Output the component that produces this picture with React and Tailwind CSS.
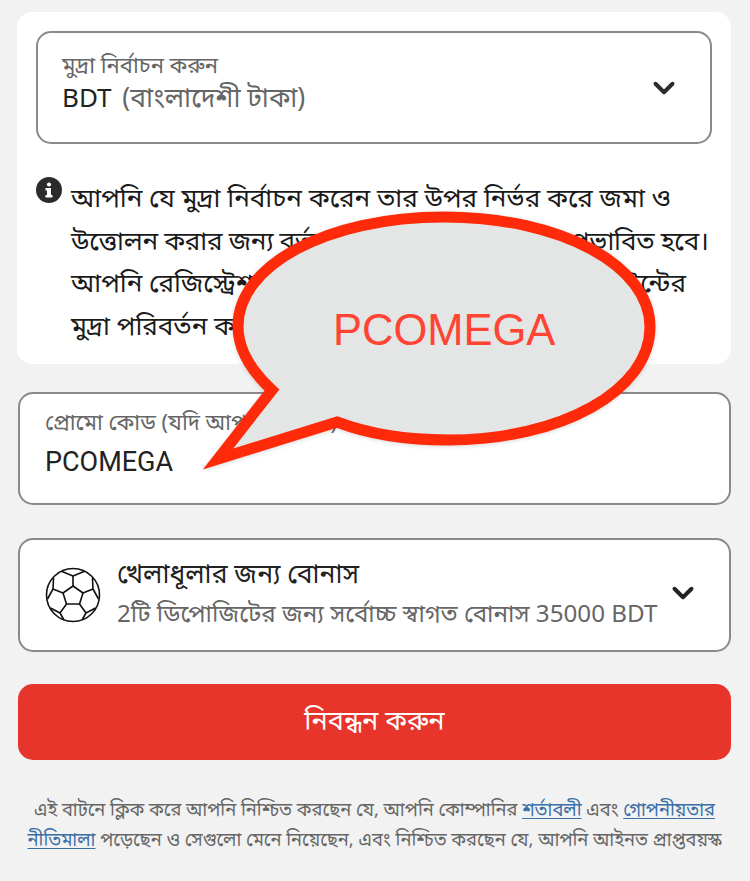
import { ChevronDown } from 'lucide-react';

const bn = "font-['Noto_Sans_Bengali','Noto_Sans','Liberation_Sans',sans-serif]";

function SoccerBall() {
  return (
    <svg width="56" height="56" viewBox="0 0 56 56" fill="none" stroke="#111" strokeWidth="1.6" strokeLinejoin="round" className="shrink-0">
      <circle cx="28" cy="28" r="26.5" />
      <path d="M28 19 L38 26 L34.5 37 L21.5 37 L18 26 Z" />
      <path d="M28 19 L28 9 M38 26 L48 22 M34.5 37 L41 46 M21.5 37 L15 46 M18 26 L8 22" />
      <path d="M17 4.5 L28 9 L39 4.5" />
      <path d="M48 22 L47.5 11 M48 22 L53.5 32" />
      <path d="M41 46 L50.5 41 M41 46 L37 53" />
      <path d="M15 46 L5.5 41 M15 46 L19 53" />
      <path d="M8 22 L8.5 11 M8 22 L2.5 32" />
    </svg>
  );
}

function InfoIcon() {
  return (
    <svg width="26" height="26" viewBox="0 0 26 26" className="shrink-0 mt-[1px]">
      <circle cx="13" cy="13" r="13" fill="#2b2b2b" />
      <circle cx="13" cy="7.5" r="2.1" fill="#fff" />
      <path d="M9.5 11 H15 V18 H16.5 V20.5 H9.5 V18 H11 V13.5 H9.5 Z" fill="#fff" />
    </svg>
  );
}

function Bubble() {
  return (
    <div className="absolute left-[190px] top-[200px] w-[480px] h-[280px]">
      <svg width="480" height="280" viewBox="0 0 480 280" className="drop-shadow-sm">
        <path
          d="M82 190 C58 168 48 146 48 126 C48 66 136 17 254 17 C372 17 460 66 460 127 C460 190 372 240 258 240 C210 240 176 233 147 222 L28 259 Z"
          fill="#e4e5e5"
          stroke="#ff2a0a"
          strokeWidth="11"
          strokeLinejoin="miter"
          strokeMiterlimit="10"
        />
      </svg>
      <div className="absolute left-[143px] top-[102px] font-['Liberation_Sans',sans-serif] text-[43.5px] leading-[56px] text-[#ff4433]">
        PCOMEGA
      </div>
    </div>
  );
}

export default function App() {
  return (
    <div className={`relative h-[881px] w-[750px] overflow-hidden bg-[#f2f2f2] ${bn}`}>
      <div className="flex flex-col pl-[17px] pr-[19px] pt-3">
        <div className="bg-white rounded-[15px] h-[352px] px-[19px] pt-[19px]">
          <div className="flex items-center justify-between h-[113px] border-2 border-[#8a8a8a] rounded-[15px] pl-[24px] pr-[29px]">
            <div className="flex flex-col -mt-1">
              <span className="text-[22px] leading-[30px] text-[#666]">মুদ্রা নির্বাচন করুন</span>
              <span className="text-[26px] leading-[36px] text-[#222]">
                BDT <span className="text-[26.5px] text-[#666] ml-1">(বাংলাদেশী টাকা)</span>
              </span>
            </div>
            <ChevronDown size={34} strokeWidth={2.8} className="text-[#2b2b2b]" />
          </div>
          <div className="flex gap-[9px] mt-[32px]">
            <InfoIcon />
            <p className="pt-1 text-[26px] leading-[42.5px] text-[#1a1a1a] whitespace-nowrap">
              আপনি যে মুদ্রা নির্বাচন করেন তার উপর নির্ভর করে জমা ও<br />
              <span className="tracking-[-0.3px]">উত্তোলন করার জন্য বর্তমান পদ্ধতি ও বোনাসগুলি প্রভাবিত হবে।</span><br />
              আপনি রেজিস্ট্রেশন করার পরে আরও আপনার অ্যাকাউন্টের<br />
              মুদ্রা পরিবর্তন করতে পারবেন
            </p>
          </div>
        </div>

        <div className="flex flex-col justify-center h-[113px] mt-[28px] ml-[1px] bg-white border-2 border-[#8a8a8a] rounded-[15px] pl-[25px]">
          <span className="-mt-1 text-[22px] leading-[30px] text-[#666]">প্রোমো কোড (যদি আপনার থাকে)</span>
          <span className="font-['Roboto',sans-serif] text-[27px] leading-[44px] text-[#222]">PCOMEGA</span>
        </div>

        <div className="flex items-center h-[114px] mt-[33px] ml-[1px] bg-white border-2 border-[#8a8a8a] rounded-[15px] pl-[25px] pr-[29px]">
          <SoccerBall />
          <div className="flex flex-col ml-[16px] flex-1 whitespace-nowrap pt-[3px]">
            <span className="text-[26.5px] leading-[38px] text-[#222]">খেলাধূলার জন্য বোনাস</span>
            <span className="text-[24.2px] leading-[40px] text-[#666]">2টি ডিপোজিটের জন্য সর্বোচ্চ স্বাগত বোনাস 35000 BDT</span>
          </div>
          <ChevronDown size={34} strokeWidth={2.8} className="text-[#222] -mt-1" />
        </div>

        <button className="h-[76px] mt-[32px] ml-[1px] bg-[#e7352b] rounded-[15px] text-white text-[27px] pt-[3px]">
          নিবন্ধন করুন
        </button>

        <p className="mt-[36px] ml-[1px] text-[18.3px] leading-[30px] text-[#666] text-center whitespace-nowrap">
          এই বাটনে ক্লিক করে আপনি নিশ্চিত করছেন যে, আপনি কোম্পানির <a className="text-[#3a6ea5] underline underline-offset-2">শর্তাবলী</a> এবং <a className="text-[#3a6ea5] underline underline-offset-2">গোপনীয়তার</a><br />
          <a className="text-[#3a6ea5] underline underline-offset-2">নীতিমালা</a> পড়েছেন ও সেগুলো মেনে নিয়েছেন, এবং নিশ্চিত করছেন যে, আপনি আইনত প্রাপ্তবয়স্ক
        </p>
      </div>
      <Bubble />
    </div>
  );
}
